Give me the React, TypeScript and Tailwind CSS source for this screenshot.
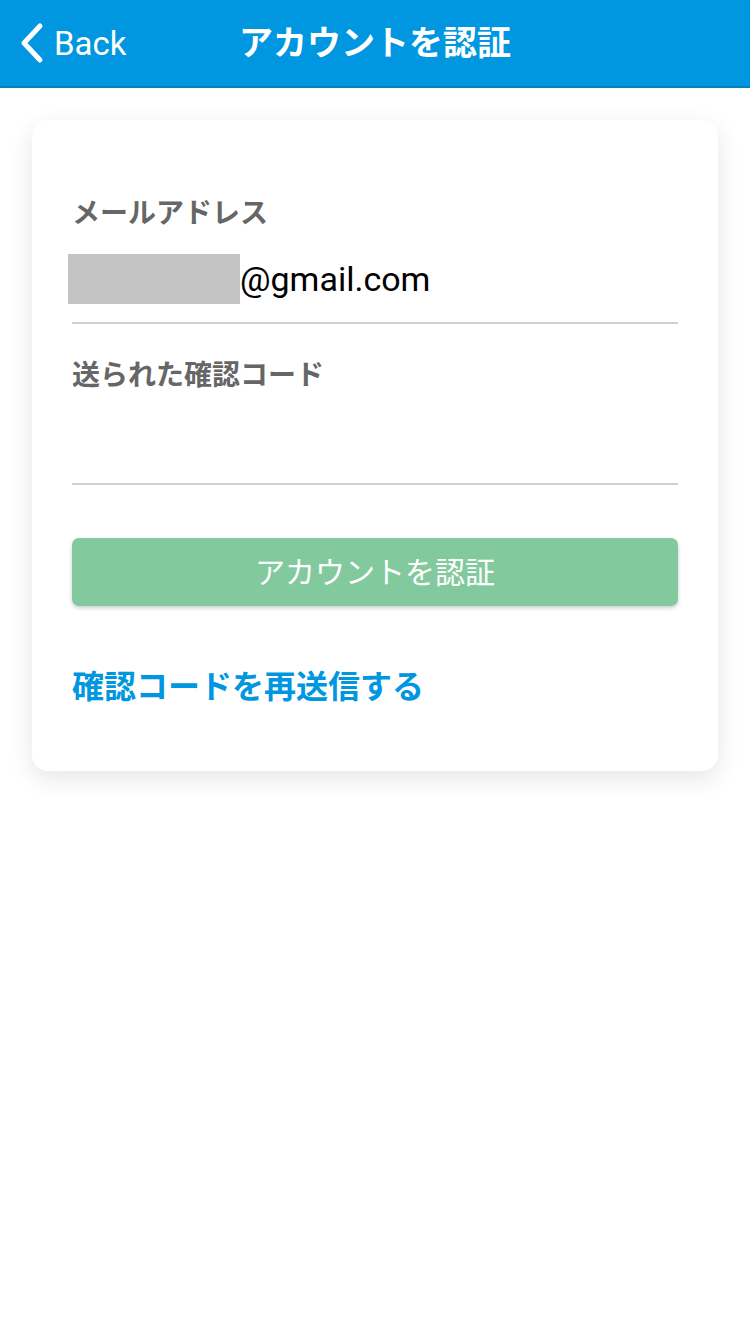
import React from "react";

export default function App() {
  const jp = { fontFamily: 'Roboto, "Noto Sans CJK JP", sans-serif' };
  return (
    <div className="min-h-[1334px] w-[750px] bg-white" style={jp}>
      <header className="relative flex h-[88px] items-center border-b-2 border-[#0a7fbf] bg-[#0097e0] text-white">
        <div className="flex items-center pl-[18px]">
          <svg width="28" height="42" viewBox="0 0 28 42" fill="none">
            <path d="M22 4 L6 21 L22 38" stroke="white" strokeWidth="5" strokeLinecap="round" strokeLinejoin="round" />
          </svg>
          <span className="ml-[8px] text-[33px] leading-none">Back</span>
        </div>
        <h1 className="absolute left-0 right-0 text-center text-[34px] font-bold leading-none">アカウントを認証</h1>
      </header>

      <div className="px-[32px] pt-[32px]">
        <div className="rounded-[16px] bg-white px-[40px] pt-[74px] pb-[64px] shadow-[0_8px_24px_rgba(0,0,0,0.10)]">
          <div className="text-[28px] font-bold leading-[40px] text-[#666666]">メールアドレス</div>
          <div className="mt-[20px] flex h-[50px] items-center -ml-[4px]">
            <div className="h-[50px] w-[172px] bg-[#c4c4c4]" />
            <span className="text-[34px] leading-none text-black">@gmail.com</span>
          </div>
          <div className="mt-[18px] h-[2px] bg-[#cfcfcf]" />

          <div className="mt-[32px] text-[28px] font-bold leading-[40px] text-[#666666]">送られた確認コード</div>
          <div className="mt-[87px] h-[2px] bg-[#cfcfcf]" />

          <button className="mt-[53px] flex h-[68px] w-full items-center justify-center rounded-[7px] bg-[#82c99d] text-[30px] text-white shadow-[0_2px_4px_rgba(0,0,0,0.2)]">
            アカウントを認証
          </button>

          <div className="mt-[61px] text-[32px] font-bold leading-[40px] text-[#0097e0]">確認コードを再送信する</div>
        </div>
      </div>
    </div>
  );
}
